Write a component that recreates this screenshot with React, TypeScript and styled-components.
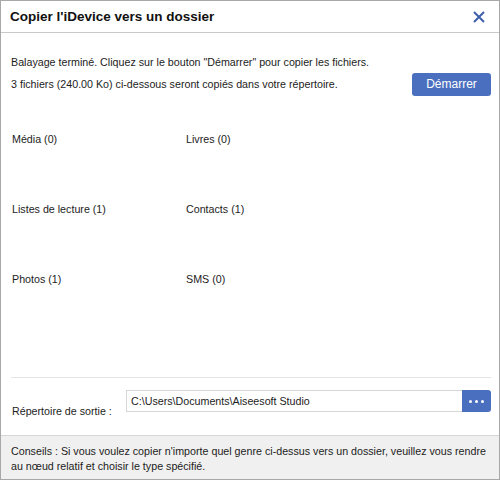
import React from "react";
import styled, { createGlobalStyle } from "styled-components";

const Global = createGlobalStyle`
  html, body { margin: 0; padding: 0; background: #fff; }
  body { font-family: "Liberation Sans", Arial, sans-serif; font-size: 10.7px; color: #1c1c1c; }
  * { box-sizing: border-box; }
`;

const Window = styled.div`
  width: 500px;
  height: 480px;
  border: 1px solid #a8a8a8;
  display: flex;
  flex-direction: column;
  background: #fff;
`;

const TitleBar = styled.div`
  height: 32px;
  flex: none;
  display: flex;
  align-items: center;
  justify-content: space-between;
  padding: 0 14px 0 9px;
  border-bottom: 1px solid #c9c9c9;
`;

const Title = styled.h1`
  margin: 0;
  font-size: 13.5px;
  font-weight: bold;
  color: #111;
`;

const CloseButton = styled.button`
  width: 12px;
  height: 12px;
  padding: 0;
  border: 0;
  background: none;
  display: flex;
  cursor: pointer;
`;

const Body = styled.div`
  flex: 1;
  display: flex;
  flex-direction: column;
  padding: 18px 8px 0 10px;
`;

const Message = styled.div`
  height: 22px;
  line-height: 22px;
  display: flex;
  align-items: center;
  justify-content: space-between;
  white-space: nowrap;
`;

const PrimaryButton = styled.button`
  width: 79px;
  height: 23px;
  border: 0;
  border-radius: 3px;
  background: #4a6fbf;
  color: #fff;
  font-family: inherit;
  font-size: 12px;
  padding: 0;
  cursor: pointer;
`;

const Categories = styled.div`
  display: grid;
  grid-template-columns: 174px 1fr;
  grid-auto-rows: 70px;
  margin-top: 37px;
  padding-left: 1px;
`;

const Category = styled.div`
  line-height: 14px;
`;

const Divider = styled.div`
  margin-top: 35px;
  height: 1px;
  background: #e4e4e4;
`;

const OutputRow = styled.div`
  display: flex;
  align-items: flex-start;
  margin-top: 12px;
  padding-left: 1px;
`;

const OutputLabel = styled.span`
  width: 114px;
  line-height: 14px;
  margin-top: 14px;
`;

const PathBox = styled.div`
  display: flex;
  width: 365px;
  height: 22px;
`;

const PathInput = styled.input`
  flex: 1;
  min-width: 0;
  height: 22px;
  border: 1px solid #d6d6d6;
  border-right: 0;
  padding: 0 4px;
  font-family: inherit;
  font-size: 10.7px;
  color: #1c1c1c;
  outline: none;
`;

const BrowseButton = styled.button`
  width: 29px;
  height: 22px;
  border: 0;
  border-radius: 0 3px 3px 0;
  background: #4a6fbf;
  display: flex;
  align-items: center;
  justify-content: center;
  gap: 3px;
  padding: 0;
  cursor: pointer;
`;

const Dot = styled.span`
  width: 3px;
  height: 3px;
  background: #fff;
  border-radius: 50%;
`;

const Footer = styled.div`
  flex: none;
  height: 44px;
  background: #f0f0f0;
  border-top: 1px solid #d6d6d6;
  padding: 8px 6px 0 10px;
  line-height: 15px;
  white-space: nowrap;
`;

const categories = [
  "Média (0)",
  "Livres (0)",
  "Listes de lecture (1)",
  "Contacts (1)",
  "Photos (1)",
  "SMS (0)",
];

export default function App() {
  return (
    <>
      <Global />
      <Window>
        <TitleBar>
          <Title>Copier l'iDevice vers un dossier</Title>
          <CloseButton aria-label="Fermer">
            <svg width="12" height="12" viewBox="0 0 12 12">
              <path d="M1 1 L11 11 M11 1 L1 11" stroke="#3f5fad" strokeWidth="2" />
            </svg>
          </CloseButton>
        </TitleBar>
        <Body>
          <Message>
            Balayage terminé. Cliquez sur le bouton "Démarrer" pour copier les fichiers.
          </Message>
          <Message>
            <span>3 fichiers (240.00 Ko) ci-dessous seront copiés dans votre répertoire.</span>
            <PrimaryButton>Démarrer</PrimaryButton>
          </Message>
          <Categories>
            {categories.map((c) => (
              <Category key={c}>{c}</Category>
            ))}
          </Categories>
          <Divider />
          <OutputRow>
            <OutputLabel>Répertoire de sortie :</OutputLabel>
            <PathBox>
              <PathInput readOnly value="C:\Users\Documents\Aiseesoft Studio" />
              <BrowseButton aria-label="Parcourir">
                <Dot />
                <Dot />
                <Dot />
              </BrowseButton>
            </PathBox>
          </OutputRow>
        </Body>
        <Footer>
          Conseils : Si vous voulez copier n'importe quel genre ci-dessus vers un dossier, veuillez vous rendre
          <br />
          au nœud relatif et choisir le type spécifié.
        </Footer>
      </Window>
    </>
  );
}
